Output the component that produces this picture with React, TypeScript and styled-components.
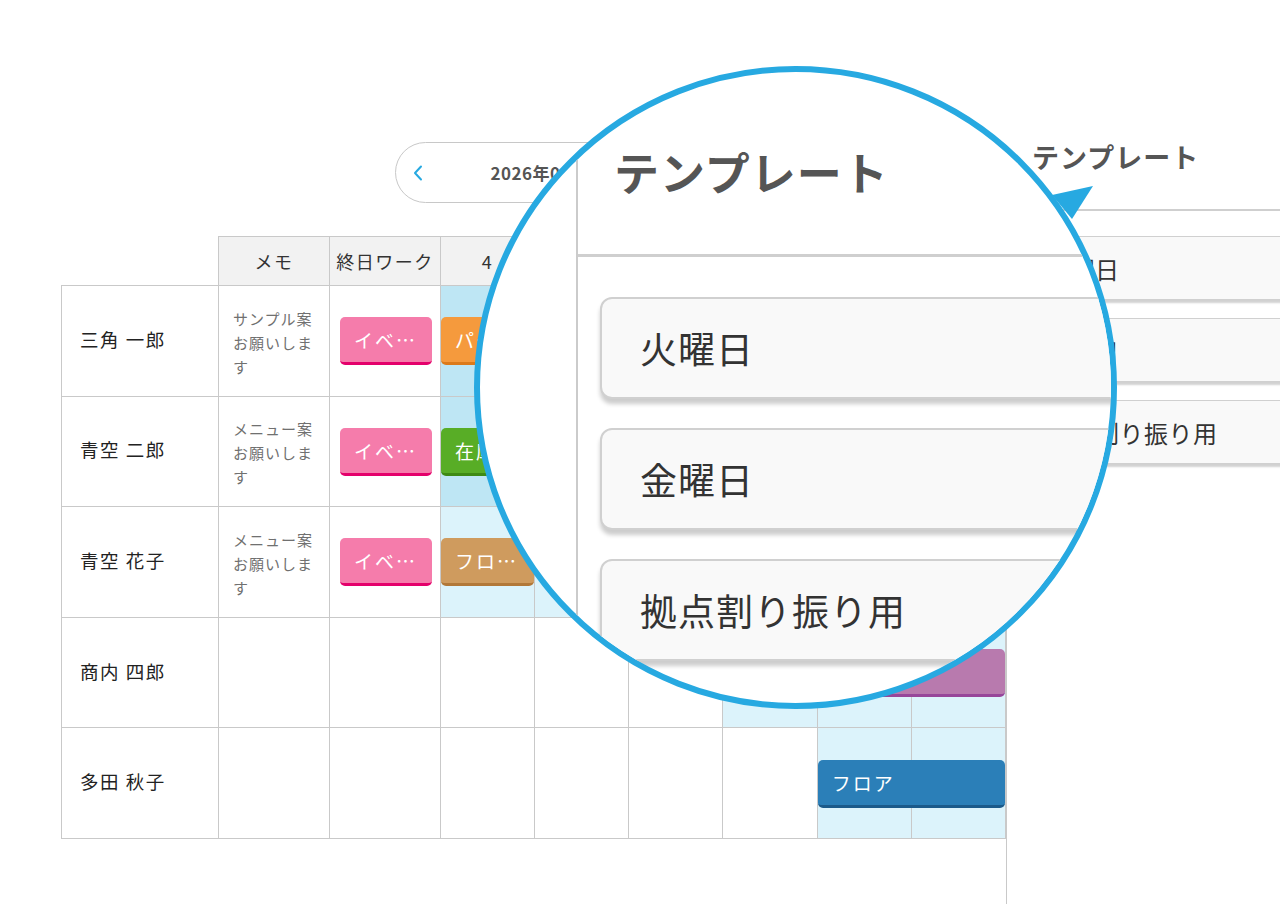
import React from "react";
import styled, { createGlobalStyle } from "styled-components";

const GlobalStyle = createGlobalStyle`
  *, *::before, *::after { box-sizing: border-box; }
  html, body { margin: 0; padding: 0; background: #ffffff; }
  body {
    font-family: "Noto Sans CJK JP", "Noto Sans", sans-serif;
    color: #333333;
  }
`;

const LINE = "#c9c9c9";
const COLS = "158px 111px 111px repeat(6, 1fr)";
const ACCENT = "#27a9e1";

type Tint = "none" | "light" | "strong";
type Tone = "pink" | "orange" | "green" | "brown" | "purple" | "blue";

const tintColors: Record<Tint, string> = {
  none: "#ffffff",
  light: "#dcf3fb",
  strong: "#bee6f4",
};

const tones: Record<Tone, { bg: string; edge: string }> = {
  pink: { bg: "#f57cab", edge: "#e4006b" },
  orange: { bg: "#f59a3d", edge: "#dc7a1a" },
  green: { bg: "#58ad26", edge: "#3e8a14" },
  brown: { bg: "#cf9b5e", edge: "#b27838" },
  purple: { bg: "#b87aae", edge: "#97469a" },
  blue: { bg: "#2b7fb8", edge: "#1b5a8a" },
};

/* ---------- page frame ---------- */

const Stage = styled.main`
  position: relative;
  width: 1280px;
  height: 904px;
  overflow: hidden;
  display: flex;
  background: #fff;
`;

const SchedulePane = styled.section`
  flex: none;
  width: 1006px;
  padding: 142px 0 0 61px;
  display: flex;
  flex-direction: column;
`;

/* ---------- month switcher ---------- */

const MonthNav = styled.nav`
  align-self: center;
  width: 277px;
  height: 61px;
  margin-bottom: 33px;
  border: 1px solid #c8c8c8;
  border-radius: 31px;
  display: flex;
  align-items: center;
  justify-content: space-between;
  padding: 0 17px;
`;

const MonthLabel = styled.span`
  padding-left: 12px;
  font-size: 17px;
  font-weight: 700;
  color: #555;
  letter-spacing: 0.5px;
`;

const NavArrow = ({ dir }: { dir: "prev" | "next" }) => (
  <svg width="10" height="16" viewBox="0 0 10 16" fill="none">
    <path
      d={dir === "prev" ? "M8 1.5 L2 8 L8 14.5" : "M2 1.5 L8 8 L2 14.5"}
      stroke={ACCENT}
      strokeWidth="2"
      strokeLinecap="round"
      strokeLinejoin="round"
    />
  </svg>
);

/* ---------- shift table ---------- */

const Table = styled.div`
  width: 945px;
  display: flex;
  flex-direction: column;
`;

const HeadRow = styled.div`
  display: grid;
  grid-template-columns: ${COLS};
  height: 50px;
`;

const HeadBlank = styled.div`
  border-right: 1px solid ${LINE};
  border-bottom: 1px solid ${LINE};
`;

const HeadCell = styled.div`
  background: #f2f2f2;
  border-top: 1px solid ${LINE};
  border-right: 1px solid ${LINE};
  border-bottom: 1px solid ${LINE};
  display: flex;
  align-items: center;
  justify-content: center;
  font-size: 18px;
  letter-spacing: 1.5px;
  color: #333;
  white-space: nowrap;
`;

const BodyRow = styled.div`
  display: grid;
  grid-template-columns: ${COLS};
  grid-template-rows: 1fr;
  height: 110.6px;
`;

const Cell = styled.div<{ $col: number; $tint?: Tint }>`
  grid-row: 1;
  grid-column: ${(p) => p.$col};
  border-right: 1px solid ${LINE};
  border-bottom: 1px solid ${LINE};
  background: ${(p) => tintColors[p.$tint ?? "none"]};
`;

const NameCell = styled(Cell)`
  border-left: 1px solid ${LINE};
  display: flex;
  align-items: center;
  padding: 0 0 4px 18px;
  font-size: 18.5px;
  letter-spacing: 1.5px;
  color: #222;
`;

const MemoCell = styled(Cell)`
  display: flex;
  align-items: center;
  padding: 4px 12px 0 14px;
  font-size: 15px;
  line-height: 24px;
  letter-spacing: 1px;
  color: #707070;
`;

const Chip = styled.div<{ $tone: Tone; $col: number; $span: number; $inset?: boolean }>`
  grid-row: 1;
  grid-column: ${(p) => `${p.$col} / span ${p.$span}`};
  align-self: center;
  z-index: 1;
  height: 48px;
  margin: ${(p) => (p.$inset ? "0 9px 0 10px" : "0 1px 0 0")};
  padding: 0 14px;
  border-radius: 5px;
  background: ${(p) => tones[p.$tone].bg};
  border-bottom: 3px solid ${(p) => tones[p.$tone].edge};
  color: #fff;
  font-size: 19px;
  line-height: 45px;
  letter-spacing: 2px;
  white-space: nowrap;
  overflow: hidden;
  text-overflow: ellipsis;
`;

/* ---------- template panel ---------- */

const TemplatePanel = styled.aside`
  flex: 1;
  min-width: 0;
  display: flex;
  flex-direction: column;
`;

const PanelHead = styled.header`
  flex: none;
  height: 211px;
  padding: 139px 0 0 26px;
  border-bottom: 2px solid #cfcfcf;
`;

const PanelTitle = styled.h2<{ $large?: boolean }>`
  margin: 0;
  font-weight: 700;
  color: #555;
  white-space: nowrap;
  font-size: ${(p) => (p.$large ? "45px" : "27px")};
  line-height: ${(p) => (p.$large ? "48px" : "36px")};
  letter-spacing: 1px;
`;

const PanelBody = styled.div`
  flex: 1;
  border-left: 1px solid #c9c9c9;
  padding: 25px 0 0 15px;
  display: flex;
  flex-direction: column;
  gap: 18px;
`;

const TemplateCard = styled.div<{ $large?: boolean }>`
  flex: none;
  display: flex;
  align-items: center;
  background: #f9f9f9;
  color: #333;
  white-space: nowrap;
  width: ${(p) => (p.$large ? "760px" : "300px")};
  height: ${(p) => (p.$large ? "102px" : "64px")};
  padding-left: ${(p) => (p.$large ? "38px" : "23px")};
  border: ${(p) => (p.$large ? "2px" : "1px")} solid #d0d0d0;
  border-radius: ${(p) => (p.$large ? "12px" : "6px")};
  box-shadow: ${(p) =>
    p.$large ? "0 5px 4px rgba(0, 0, 0, 0.2)" : "0 3px 2px rgba(0, 0, 0, 0.18)"};
  font-size: ${(p) => (p.$large ? "37px" : "24px")};
  letter-spacing: ${(p) => (p.$large ? "1px" : "0.5px")};
`;

/* ---------- magnifier ---------- */

const Lens = styled.div`
  position: absolute;
  left: 474px;
  top: 66px;
  width: 643px;
  height: 643px;
  border-radius: 50%;
  border: 6px solid ${ACCENT};
  background: #fff;
  overflow: hidden;
  z-index: 2;
  display: flex;
`;

const ZoomPanel = styled.div`
  margin-left: 96px;
  flex: 1;
  border-left: 2px solid #cbcbcb;
  display: flex;
  flex-direction: column;
`;

const ZoomHead = styled.div`
  flex: none;
  height: 185px;
  padding: 76px 0 0 36px;
  border-bottom: 3px solid #cfcfcf;
`;

const ZoomList = styled.div`
  padding: 40px 0 0 22px;
  display: flex;
  flex-direction: column;
  gap: 29px;
`;

const LensTail = styled.svg`
  position: absolute;
  left: 1048px;
  top: 181px;
  z-index: 3;
`;

/* ---------- data ---------- */

interface Shift {
  label: string;
  tone: Tone;
  start: number;
  span: number;
}

interface Member {
  name: string;
  memo?: string;
  allDay?: string;
  tints: Tint[];
  shifts: Shift[];
}

const days = ["4", "5", "6", "7", "8", "9"];

const members: Member[] = [
  {
    name: "三角 一郎",
    memo: "サンプル案お願いします",
    allDay: "イベ…",
    tints: ["strong", "none", "none", "none", "light", "light"],
    shifts: [{ label: "パート", tone: "orange", start: 0, span: 1 }],
  },
  {
    name: "青空 二郎",
    memo: "メニュー案お願いします",
    allDay: "イベ…",
    tints: ["strong", "none", "none", "none", "light", "light"],
    shifts: [{ label: "在庫", tone: "green", start: 0, span: 1 }],
  },
  {
    name: "青空 花子",
    memo: "メニュー案お願いします",
    allDay: "イベ…",
    tints: ["light", "light", "none", "none", "light", "light"],
    shifts: [{ label: "フロ…", tone: "brown", start: 0, span: 1 }],
  },
  {
    name: "商内 四郎",
    tints: ["none", "none", "none", "light", "light", "light"],
    shifts: [{ label: "キッチン", tone: "purple", start: 3, span: 3 }],
  },
  {
    name: "多田 秋子",
    tints: ["none", "none", "none", "none", "light", "light"],
    shifts: [{ label: "フロア", tone: "blue", start: 4, span: 2 }],
  },
];

const templates = ["火曜日", "金曜日", "拠点割り振り用"];

/* ---------- page ---------- */

export default function App() {
  return (
    <>
      <GlobalStyle />
      <Stage>
        <SchedulePane>
          <MonthNav>
            <NavArrow dir="prev" />
            <MonthLabel>2026年04月</MonthLabel>
            <NavArrow dir="next" />
          </MonthNav>

          <Table>
            <HeadRow>
              <HeadBlank />
              <HeadCell>メモ</HeadCell>
              <HeadCell>終日ワーク</HeadCell>
              {days.map((d) => (
                <HeadCell key={d}>{d}</HeadCell>
              ))}
            </HeadRow>

            {members.map((m) => (
              <BodyRow key={m.name}>
                <NameCell $col={1}>{m.name}</NameCell>
                <MemoCell $col={2}>{m.memo}</MemoCell>
                <Cell $col={3} />
                {m.tints.map((t, i) => (
                  <Cell key={i} $col={i + 4} $tint={t} />
                ))}
                {m.allDay && (
                  <Chip $tone="pink" $col={3} $span={1} $inset>
                    {m.allDay}
                  </Chip>
                )}
                {m.shifts.map((s) => (
                  <Chip key={s.label} $tone={s.tone} $col={s.start + 4} $span={s.span}>
                    {s.label}
                  </Chip>
                ))}
              </BodyRow>
            ))}
          </Table>
        </SchedulePane>

        <TemplatePanel>
          <PanelHead>
            <PanelTitle>テンプレート</PanelTitle>
          </PanelHead>
          <PanelBody>
            {templates.map((t) => (
              <TemplateCard key={t}>{t}</TemplateCard>
            ))}
          </PanelBody>
        </TemplatePanel>

        <Lens>
          <ZoomPanel>
            <ZoomHead>
              <PanelTitle $large>テンプレート</PanelTitle>
            </ZoomHead>
            <ZoomList>
              {templates.map((t) => (
                <TemplateCard key={t} $large>
                  {t}
                </TemplateCard>
              ))}
            </ZoomList>
          </ZoomPanel>
        </Lens>

        <LensTail width="50" height="42" viewBox="0 0 50 42">
          <polygon points="4,14 45,5 24,38" fill={ACCENT} />
        </LensTail>
      </Stage>
    </>
  );
}
